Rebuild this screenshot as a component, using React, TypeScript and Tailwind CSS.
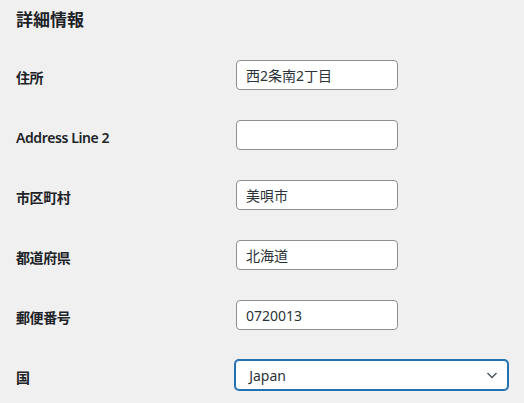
import React from "react";

const fields = [
  { label: "住所", value: "西2条南2丁目" },
  { label: "Address Line 2", value: "" },
  { label: "市区町村", value: "美唄市" },
  { label: "都道府県", value: "北海道" },
  { label: "郵便番号", value: "0720013" },
];

const font = "font-['Noto_Sans','Noto_Sans_CJK_JP',sans-serif]";

const App = () => {
  return (
    <div className={`min-h-screen bg-[#f0f0f1] px-4 text-[#1d2327] ${font}`}>
      <h2 className="pt-2 text-[17px] font-semibold leading-6 mb-[13px]">詳細情報</h2>
      {fields.map((f) => (
        <div key={f.label} className="flex h-[60px] items-center">
          <label className="w-[220px] pt-[5px] text-[14px] font-semibold leading-[18px] tracking-[-0.4px]">{f.label}</label>
          <input
            readOnly
            value={f.value}
            className="h-[30px] w-[162px] rounded-[4px] border border-[#8c8f94] bg-white px-[9px] text-[14px] text-[#2c3338] outline-none"
          />
        </div>
      ))}
      <div className="flex h-[60px] items-center">
        <label className="w-[220px] pt-[5px] text-[14px] font-semibold leading-[18px]">国</label>
        <div className="relative ml-[1px] flex h-[30px] w-[275px] items-center rounded-[4px] border border-[#2271b1] bg-white pl-[13px] text-[14px] text-[#2c3338] shadow-[0_0_0_1px_#2271b1]">
          Japan
          <svg className="absolute right-[9px] top-[8px]" width="12" height="12" viewBox="0 0 12 12" fill="none">
            <path d="M1.5 4 L6 8.5 L10.5 4" stroke="#50575e" strokeWidth="1.5" />
          </svg>
        </div>
      </div>
    </div>
  );
};

export default App;
